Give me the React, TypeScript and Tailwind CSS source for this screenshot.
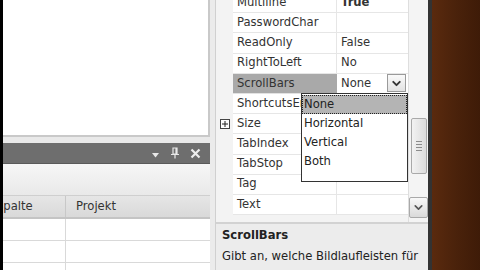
import { ChevronDown } from 'lucide-react'

const rows = [
  { name: 'Multiline', value: 'True', bold: true },
  { name: 'PasswordChar', value: '' },
  { name: 'ReadOnly', value: 'False' },
  { name: 'RightToLeft', value: 'No' },
  { name: 'ScrollBars', value: 'None', selected: true },
  { name: 'ShortcutsEnabled', value: 'True' },
  { name: 'Size', value: '', expand: true },
  { name: 'TabIndex', value: '' },
  { name: 'TabStop', value: '' },
  { name: 'Tag', value: '' },
  { name: 'Text', value: '' },
]

const options = ['None', 'Horizontal', 'Vertical', 'Both']

function TitleBar() {
  return (
    <div className="h-[21px] shrink-0 bg-[#6e6e6e] flex items-center justify-end gap-[10px] pr-[9px] border-b border-[#5a5a5a]">
      {/* menu triangle */}
      <svg width="9" height="9" viewBox="0 0 9 9" className="mt-[4px]">
        <path d="M1 2 L8 2 L4.5 6.5 Z" fill="#e8e8e8" />
      </svg>
      {/* pin */}
      <svg width="10" height="12" viewBox="0 0 10 12">
        <path d="M3 1 H7 V7 H3 Z M6 1 V7" fill="none" stroke="#e8e8e8" strokeWidth="1.2" />
        <path d="M1 7.5 H9 M5 7.5 V11.5" stroke="#e8e8e8" strokeWidth="1.2" />
      </svg>
      {/* close */}
      <svg width="11" height="11" viewBox="0 0 11 11">
        <path d="M1.5 1.5 L9.5 9.5 M9.5 1.5 L1.5 9.5" stroke="#eeeeee" strokeWidth="2.2" />
      </svg>
    </div>
  )
}

function LeftPanel() {
  return (
    <div className="w-[207px] flex flex-col bg-[#e9e9e9]">
      <div className="h-[137px] shrink-0 bg-white border-r-2 border-b-2 border-[#c9c9c9]" />
      <div className="h-[6px] shrink-0" />
      <TitleBar />
      <div className="h-[32px] shrink-0 bg-gradient-to-b from-[#f6f6f6] to-[#e9e9e9] border-b border-[#cfcfcf]" />
      <div className="h-[23px] shrink-0 flex bg-gradient-to-b from-[#e6e6e6] to-[#d9d9d9] border-b-2 border-[#c4c4c4] text-[11.6px] text-[#333]">
        <div className="w-[63px] overflow-hidden flex items-center border-r border-[#c8c8c8]">
          <span className="-ml-[7px] whitespace-nowrap">Spalte</span>
        </div>
        <div className="flex-1 flex items-center pl-[10px]">Projekt</div>
      </div>
      {[0, 1, 2].map((i) => (
        <div key={i} className="h-[22px] shrink-0 flex bg-white border-b border-[#d9d9d9]">
          <div className="w-[63px] border-r border-[#d9d9d9]" />
          <div className="flex-1" />
        </div>
      ))}
    </div>
  )
}

function PropertyGrid() {
  return (
    <div className="relative w-[213px] flex flex-col bg-[#ededed] border-l border-[#d0d0d0]">
      <div className="h-[222px] shrink-0 flex overflow-hidden">
        <div className="w-[193px] flex flex-col bg-[#f3f3f3]">
          <div className="-mt-[7px]">
            {rows.map((r) => (
              <div key={r.name} className="h-[20.2px] flex text-[11.6px] leading-none text-[#333]">
                <div className="w-[17px] flex items-center justify-center">
                  {r.expand && (
                    <div className="w-[10px] h-[10px] border border-[#444] bg-white flex items-center justify-center">
                      <svg width="6" height="6" viewBox="0 0 6 6">
                        <path d="M0 3 H6 M3 0 V6" stroke="#222" strokeWidth="1" />
                      </svg>
                    </div>
                  )}
                </div>
                <div
                  className={
                    r.selected
                      ? 'w-[104px] flex items-center pl-[4px] bg-[#a9a9a9] border-b border-[#e2e2e2] overflow-hidden whitespace-nowrap'
                      : 'w-[104px] flex items-center pl-[4px] bg-white border-b border-r border-[#e6e6e6] overflow-hidden whitespace-nowrap'
                  }
                >
                  {r.name}
                </div>
                <div className="flex-1 flex items-center pl-[4px] bg-white border-b border-[#e6e6e6]">
                  <span className={r.bold ? 'font-bold' : ''}>{r.value}</span>
                  {r.selected && (
                    <div className="ml-auto mr-[2px] w-[19px] h-[18px] border border-[#9a9a9a] bg-gradient-to-b from-[#fafafa] to-[#e2e2e2] flex items-center justify-center">
                      <ChevronDown size={13} strokeWidth={3.5} color="#333" />
                    </div>
                  )}
                </div>
              </div>
            ))}
          </div>
        </div>
        {/* vertical scrollbar */}
        <div className="w-[20px] bg-[#f4f4f4] border-l border-[#dedede] flex flex-col items-center">
          <div className="h-[118px] shrink-0" />
          <div className="w-[16px] h-[56px] shrink-0 border border-[#a9a9a9] rounded-[2px] bg-gradient-to-r from-[#f2f2f2] to-[#dcdcdc] flex flex-col items-center justify-center gap-[2px]">
            {[0, 1, 2, 3].map((i) => (
              <div key={i} className="w-[6px] h-[1px] bg-[#8c8c8c]" />
            ))}
          </div>
          <div className="h-[23px] shrink-0" />
          <div className="w-[19px] h-[21px] shrink-0 border border-[#a9a9a9] rounded-[2px] bg-gradient-to-b from-[#f8f8f8] to-[#dadada] flex items-center justify-center">
            <ChevronDown size={13} strokeWidth={3} color="#555" />
          </div>
        </div>
      </div>
      {/* description */}
      <div className="flex-1 bg-[#ececec] border-t-2 border-[#d2d2d2] px-[6px] pt-[1px] text-[11.6px] leading-[21px] text-[#222] whitespace-nowrap overflow-hidden">
        <div className="font-bold">ScrollBars</div>
        <div>Gibt an, welche Bildlaufleisten für</div>
        <div>mehrzeilige Bearbeitungssteuerelemente</div>
      </div>

      {/* open dropdown list */}
      <div className="absolute left-[85px] top-[93px] w-[107px] h-[89px] bg-white border border-[#333] text-[11.6px] text-[#222] py-[1px]">
        {options.map((o, i) => (
          <div
            key={o}
            className={
              i === 0
                ? 'h-[19px] flex items-center px-[1px] bg-[#b4b4b4] border border-dotted border-[#222]'
                : 'h-[19px] flex items-center px-[2px]'
            }
          >
            {o}
          </div>
        ))}
      </div>
    </div>
  )
}

export default function App() {
  return (
    <div
      className="w-[480px] h-[270px] overflow-hidden flex bg-black"
      style={{ fontFamily: 'Tahoma, "DejaVu Sans", sans-serif' }}
    >
      <div className="w-[3px] bg-black" />
      <LeftPanel />
      <div className="w-[5px] bg-[#ebebeb]" />
      <PropertyGrid />
      <div className="w-[4px] bg-[#333]" />
      <div className="flex-1 bg-gradient-to-r from-[#5a2a0e] via-[#4a220b] to-[#3e1b08]" />
    </div>
  )
}
